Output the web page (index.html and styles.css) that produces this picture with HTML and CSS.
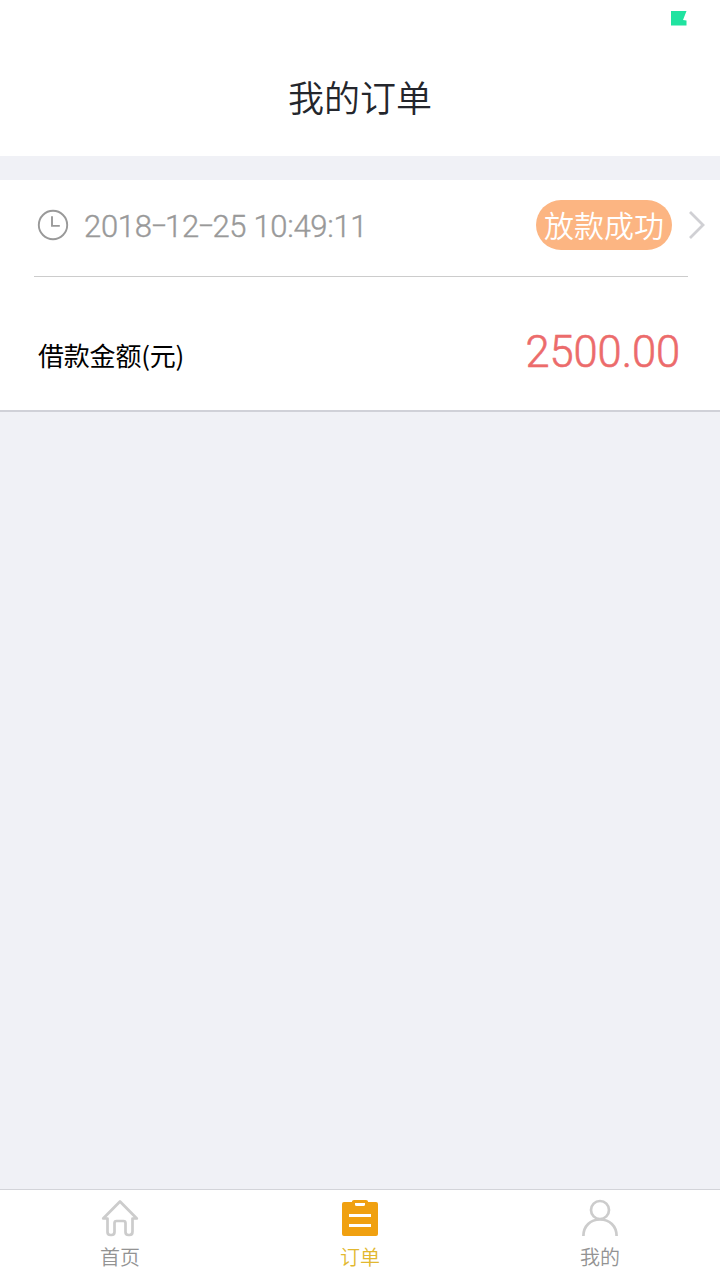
FILE: index.html
```html
<!DOCTYPE html>
<html lang="zh-CN">
<head>
<meta charset="utf-8">
<title>我的订单</title>
<link rel="stylesheet" href="styles.css">
</head>
<body>
<header class="header">
  <svg class="status" width="16" height="15" viewBox="0 0 16 15"><path d="M0 0H15.5L12 9L15.5 9.5V14.5H0Z" fill="#20e3a0"/></svg>
  <h1 class="title">我的订单</h1>
</header>
<main class="content">
  <article class="order">
    <div class="order-head">
      <svg class="clock" width="32" height="32" viewBox="0 0 32 32" fill="none" stroke="#999" stroke-width="1.9"><circle cx="16" cy="16" r="14.2"/><path d="M15 7.2V16.9H22.8"/></svg>
      <time class="date">2018<span class="dash">-</span>12<span class="dash">-</span>25 10:49:11</time>
      <span class="badge">放款成功</span>
      <svg class="arrow" width="18" height="30" viewBox="0 0 18 30" fill="none" stroke="#d0d0d4" stroke-width="2.8"><path d="M2 2L15 15L2 28"/></svg>
    </div>
    <div class="order-body">
      <span class="label">借款金额(元)</span>
      <span class="amount">2500.00</span>
    </div>
  </article>
</main>
<nav class="tabs">
  <a class="tab">
    <svg class="icon" width="40" height="40" viewBox="0 0 40 40" fill="none" stroke="#ccc" stroke-width="2.7" stroke-linejoin="round" stroke-linecap="round"><path d="M7.5 19.5H3.2L20 2.500L36.8 19.5H32.5V32.500Q32.500 36 29.5 36H28.5Q25.500 36 25.500 33V24Q25.5 22 23.500 22H16.5Q14.500 22 14.500 24V33Q14.500 36 11.500 36H10.5Q7.500 36 7.5 33Z"/></svg>
    <span>首页</span>
  </a>
  <a class="tab active">
    <svg class="icon" width="40" height="40" viewBox="0 0 40 40"><path d="M4 3H12V2.500Q12 1 14 1H26Q28 1 28 2.500V3H36Q38 3 38 5V35Q38 37 36 37H4Q2 37 2 35V5Q2 3 4 3Z" fill="#f0a010"/><path d="M15 4H25V5.5Q25 7 23.500 7H16.500Q15 7 15 5.500Z" fill="#fff"/><path d="M9 16.500H31M9 26.500H31" stroke="#fff" stroke-width="2.800"/></svg>
    <span>订单</span>
  </a>
  <a class="tab">
    <svg class="icon" width="40" height="40" viewBox="0 0 40 40" fill="none" stroke="#ccc" stroke-width="2.7"><circle cx="20" cy="11" r="9"/><path d="M3.400 37C3.400 27 10.500 20.500 20 20.500S36.600 27 36.600 37"/></svg>
    <span>我的</span>
  </a>
</nav>
</body>
</html>
```
FILE: styles.css
```css
* { box-sizing: border-box; }
body {
  margin: 0;
  height: 1280px;
  display: flex;
  flex-direction: column;
  background: #f0f1f6;
  font-family: "Noto Sans CJK SC", sans-serif;
}
.header {
  position: relative;
  height: 156px;
  padding-top: 35px;
  display: flex;
  align-items: center;
  justify-content: center;
  background: #fff;
}
.status { position: absolute; top: 11px; left: 671px; }
.title { margin: 0; font-size: 36px; font-weight: 350; line-height: 54px; color: #24262c; }
.content { flex: 1; padding-top: 24px; }
.order { height: 232px; background: #fff; border-bottom: 2px solid #d0d1d8; }
.order-head {
  height: 97px;
  margin-left: 34px;
  margin-right: 32px;
  padding: 0 0 6px 3px;
  display: flex;
  align-items: center;
  border-bottom: 1px solid #ccc;
}
.date {
  margin-left: 15px;
  padding-top: 3px;
  font: 300 31px/40px Roboto, sans-serif;
  letter-spacing: -0.3px;
  -webkit-text-stroke: 0.4px #999;
  white-space: nowrap;
  color: #999;
}
.dash { display: inline-block; width: 13.5px; text-align: center; transform: translateY(-2px) scaleX(1.6); }
.badge {
  flex: none;
  width: 136px;
  height: 50px;
  margin-left: auto;
  border-radius: 25px;
  text-align: center;
  font-size: 30px;
  font-weight: 350;
  line-height: 48px;
  color: #fff;
  background: #fcb582;
}
.arrow { flex: none; margin: 0 -18px 0 16px; }
.order-body {
  height: 133px;
  padding: 15px 40px 0 38px;
  display: flex;
  align-items: center;
  justify-content: space-between;
}
.label { padding-top: 7px; font-size: 26px; line-height: 38px; letter-spacing: -0.2px; color: #000; }
.amount {
  padding-top: 3px;
  font: 300 43.5px/50px Roboto, sans-serif;
  letter-spacing: -0.1px;
  -webkit-text-stroke: 0.6px #ec6b6b;
  color: #ec6b6b;
}
.tabs { display: flex; height: 91px; border-top: 1px solid #d3d4d9; background: #fff; }
.tab {
  flex: 1;
  padding-top: 9px;
  display: flex;
  flex-direction: column;
  align-items: center;
  font-size: 20px;
  font-weight: 350;
  line-height: 30px;
  color: #939393;
}
.tab span { margin-top: 3px; }
.active { color: #e2b830; }
```
